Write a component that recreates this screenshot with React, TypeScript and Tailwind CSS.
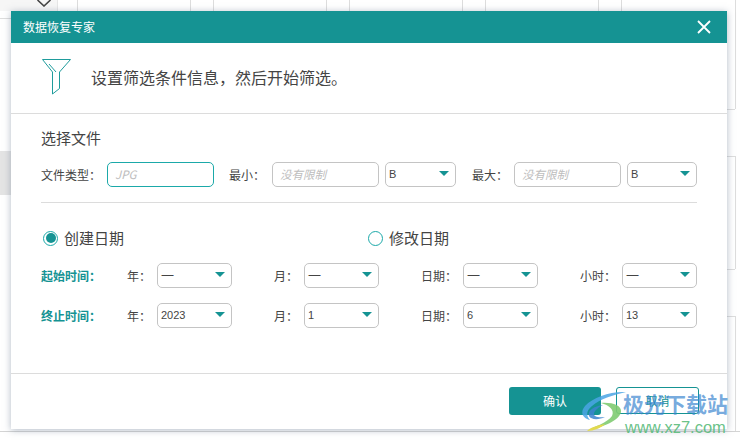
import React from "react";

const FONT = "font-['Noto_Sans_CJK_SC','Liberation_Sans',sans-serif]";

function Caret() {
  return <span className="w-0 h-0 border-x-[5px] border-x-transparent border-t-[5px] border-t-[#159393] shrink-0 -mt-[2px]" />;
}

function Select({ value, w, gap }: { value: string; w: string; gap?: string }) {
  const isDash = value === "一";
  return (
    <div className={`${w} ${gap ?? ""} h-[25px] shrink-0 flex items-center justify-between pl-[3px] pr-[6px] rounded-[5px] border border-[#c4c4c4] bg-white text-[#444] font-['Liberation_Sans','Noto_Sans_CJK_SC',sans-serif] ${isDash ? "text-[13px]" : "text-[11px]"}`}>
      <span>{value}</span>
      <Caret />
    </div>
  );
}

function PlainInput({ text, active }: { text: string; active?: boolean }) {
  return (
    <div className={`w-[107px] h-[25px] shrink-0 flex items-center pl-[7px] rounded-[5px] border ${active ? "border-[#1ba9a9]" : "border-[#c4c4c4]"} bg-white text-[11.5px] italic text-[#bdbdbd]`}>
      {text}
    </div>
  );
}

function Label({ text, w }: { text: string; w: string }) {
  return <span className={`${w} shrink-0 text-[12px] leading-none text-[#444]`}>{text}</span>;
}

function DateRow({ title, values, className }: { title: string; values: string[]; className?: string }) {
  return (
    <div className={`flex items-center h-[25px] ${className ?? ""}`}>
      <span className="w-[86px] shrink-0 text-[12px] font-bold text-[#159393]">{title}</span>
      <Label text="年：" w="w-[30px]" />
      <Select value={values[0]} w="w-[75px]" />
      <Label text="月：" w="w-[30px] ml-[42px]" />
      <Select value={values[1]} w="w-[75px]" />
      <Label text="日期：" w="w-[42px] ml-[42px]" />
      <Select value={values[2]} w="w-[75px]" />
      <Label text="小时：" w="w-[42px] ml-[42px]" />
      <Select value={values[3]} w="w-[75px]" />
    </div>
  );
}

export default function App() {
  return (
    <div className={`relative w-[740px] h-[442px] overflow-hidden bg-white ${FONT}`}>
      {/* page behind the dialog */}
      <div className="absolute top-0 left-[77px] w-px h-[11px] bg-[#ddd]" />
      <div className="absolute top-0 left-[190px] w-px h-[11px] bg-[#ddd]" />
      <div className="absolute top-0 left-[213px] w-px h-[11px] bg-[#ddd]" />
      <div className="absolute top-0 left-[326px] w-px h-[11px] bg-[#ddd]" />
      <div className="absolute top-0 left-[349px] w-px h-[11px] bg-[#ddd]" />
      <div className="absolute top-0 left-[462px] w-px h-[11px] bg-[#ddd]" />
      <div className="absolute top-0 left-[485px] w-px h-[11px] bg-[#ddd]" />
      <div className="absolute top-0 left-[598px] w-px h-[11px] bg-[#ddd]" />
      <div className="absolute top-0 left-[621px] w-px h-[11px] bg-[#ddd]" />
      <div className="absolute top-0 left-0 w-[58px] h-[11px] bg-[#f6f6f6] border-r border-[#e6e6e6]" />
      <div className="absolute top-[18px] left-0 w-[11px] h-px bg-[#ddd]" />
      <div className="absolute top-[151px] left-0 w-[11px] h-[44px] bg-[#e4e4e4]" />
      <div className="absolute top-[431px] left-0 w-[740px] h-px bg-[#d4d4d4]" />
      <div className="absolute top-0 left-[735px] w-px h-[109px] bg-[#ddd]" />
      <div className="absolute top-[156px] left-[735px] w-px h-[113px] bg-[#ddd]" />
      <div className="absolute top-[316px] left-[735px] w-px h-[115px] bg-[#ddd]" />
      <div className="absolute top-[109px] left-[727px] w-[8px] h-px bg-[#ddd]" />
      <div className="absolute top-[156px] left-[727px] w-[8px] h-px bg-[#ddd]" />
      <div className="absolute top-[269px] left-[727px] w-[8px] h-px bg-[#ddd]" />
      <div className="absolute top-[316px] left-[727px] w-[8px] h-px bg-[#ddd]" />
      <svg className="absolute top-0 left-[36px]" width="16" height="7" viewBox="0 0 16 7" fill="none">
        <path d="M1.5 0 L8 6 L14.5 0" stroke="#444" strokeWidth="1.6" />
      </svg>

      {/* dialog */}
      <div className="absolute left-[11px] top-[11px] w-[716px] h-[418px] bg-white flex flex-col shadow-[0_1px_7px_rgba(100,115,140,0.5)]">
        <div className="h-[32px] shrink-0 bg-[#159393] flex items-center justify-between pl-[12px] pr-[16px] text-[12px] text-white">
          <span>数据恢复专家</span>
          <svg width="14" height="14" viewBox="0 0 14 14" fill="none">
            <path d="M1 1 L13 13 M13 1 L1 13" stroke="#fff" strokeWidth="1.8" />
          </svg>
        </div>

        <div className="h-[71px] shrink-0 border-b border-[#dcdcdc] flex items-center pl-[31px] pb-[3px]">
          <svg width="29" height="36" viewBox="0 0 29 36" fill="none" className="mr-[20px]">
            <path d="M0.5 0.5 H28.5 L17.5 13 V29.5 L10.5 35 V13 Z" stroke="#1f9c9c" strokeWidth="1" />
            <path d="M7 5 L14 13" stroke="#1f9c9c" strokeWidth="1" />
          </svg>
          <span className="text-[16px] text-[#444]">设置筛选条件信息，然后开始筛选。</span>
        </div>

        <div className="flex-1 flex flex-col px-[30px]">
          <div className="mt-[14px] h-[20px] flex items-center text-[15px] text-[#444]">选择文件</div>
          <div className="mt-[14px] flex items-center h-[25px]">
            <Label text="文件类型：" w="w-[66px]" />
            <PlainInput text="JPG" active />
            <Label text="最小：" w="w-[43px] ml-[15px]" />
            <PlainInput text="没有限制" />
            <Select value="B" w="w-[71px]" gap="ml-[6px]" />
            <Label text="最大：" w="w-[42px] ml-[16px]" />
            <PlainInput text="没有限制" />
            <Select value="B" w="w-[70px]" gap="ml-[6px]" />
          </div>
          <div className="mt-[15px] h-px bg-[#dcdcdc]" />

          <div className="mt-[25px] h-[20px] flex items-center text-[15px] text-[#444]">
            <span className="w-[15px] h-[15px] ml-[2px] rounded-full border border-[#1ba9a9] flex items-center justify-center mr-[6px]">
              <span className="w-[10px] h-[10px] rounded-full bg-[#159393]" />
            </span>
            <span className="w-[304px]">创建日期</span>
            <span className="w-[15px] h-[15px] rounded-full border border-[#1ba9a9] mr-[6px]" />
            <span>修改日期</span>
          </div>

          <DateRow className="mt-[15px]" title="起始时间：" values={["一", "一", "一", "一"]} />
          <DateRow className="mt-[15px]" title="终止时间：" values={["2023", "1", "6", "13"]} />
        </div>

        <div className="h-[56px] shrink-0 border-t border-[#dcdcdc] flex items-start justify-end pt-[13px] pr-[28px] text-[12px]">
          <div className="w-[92px] h-[28px] rounded-[3px] bg-[#159393] text-white flex items-center justify-center">确认</div>
          <div className="w-[83px] h-[27px] ml-[15px] rounded-[3px] border border-[#159393] text-[#159393] flex items-center justify-center">取消</div>
        </div>
      </div>

      {/* watermark */}
      <div className="absolute left-[581px] top-[390px] w-[152px] h-[46px]">
        <svg className="absolute left-0 top-0" width="46" height="42" viewBox="0 0 46 42" fill="none">
          <path d="M45 2 C30 1 12 7 4 16 C-1 22 1 28 9 30 C5 26 5 21 11 16 C19 9 32 5 45 2 Z" fill="#4aa4e4" fillOpacity="0.85" />
          <path d="M22 15 C13 16 6 21 8 26 C10 30 18 30 24 27 C18 28 12 27 13 23 C14 20 18 17 22 15 Z" fill="#3c82cf" fillOpacity="0.85" />
          <path d="M20 13 C30 12 41 15 40 22 C38 31 22 37 8 40 C14 36 26 33 31 26 C34 20 28 15 20 13 Z" fill="#7fcb72" fillOpacity="0.9" />
          <path d="M6 41 C10 37 18 35 24 34 C20 38 13 41 6 41 Z" fill="#e2d94f" />
        </svg>
        <span className="absolute left-[42px] top-[1px] text-[21px] font-bold leading-[24px] whitespace-nowrap text-[#3b86cf]/70">极光下载站</span>
        <span className="absolute left-[44px] top-[28px] text-[16.5px] leading-[18px] whitespace-nowrap text-[#58bb7a]/90 font-['Liberation_Sans',sans-serif]">www.xz7.com</span>
      </div>
    </div>
  );
}
